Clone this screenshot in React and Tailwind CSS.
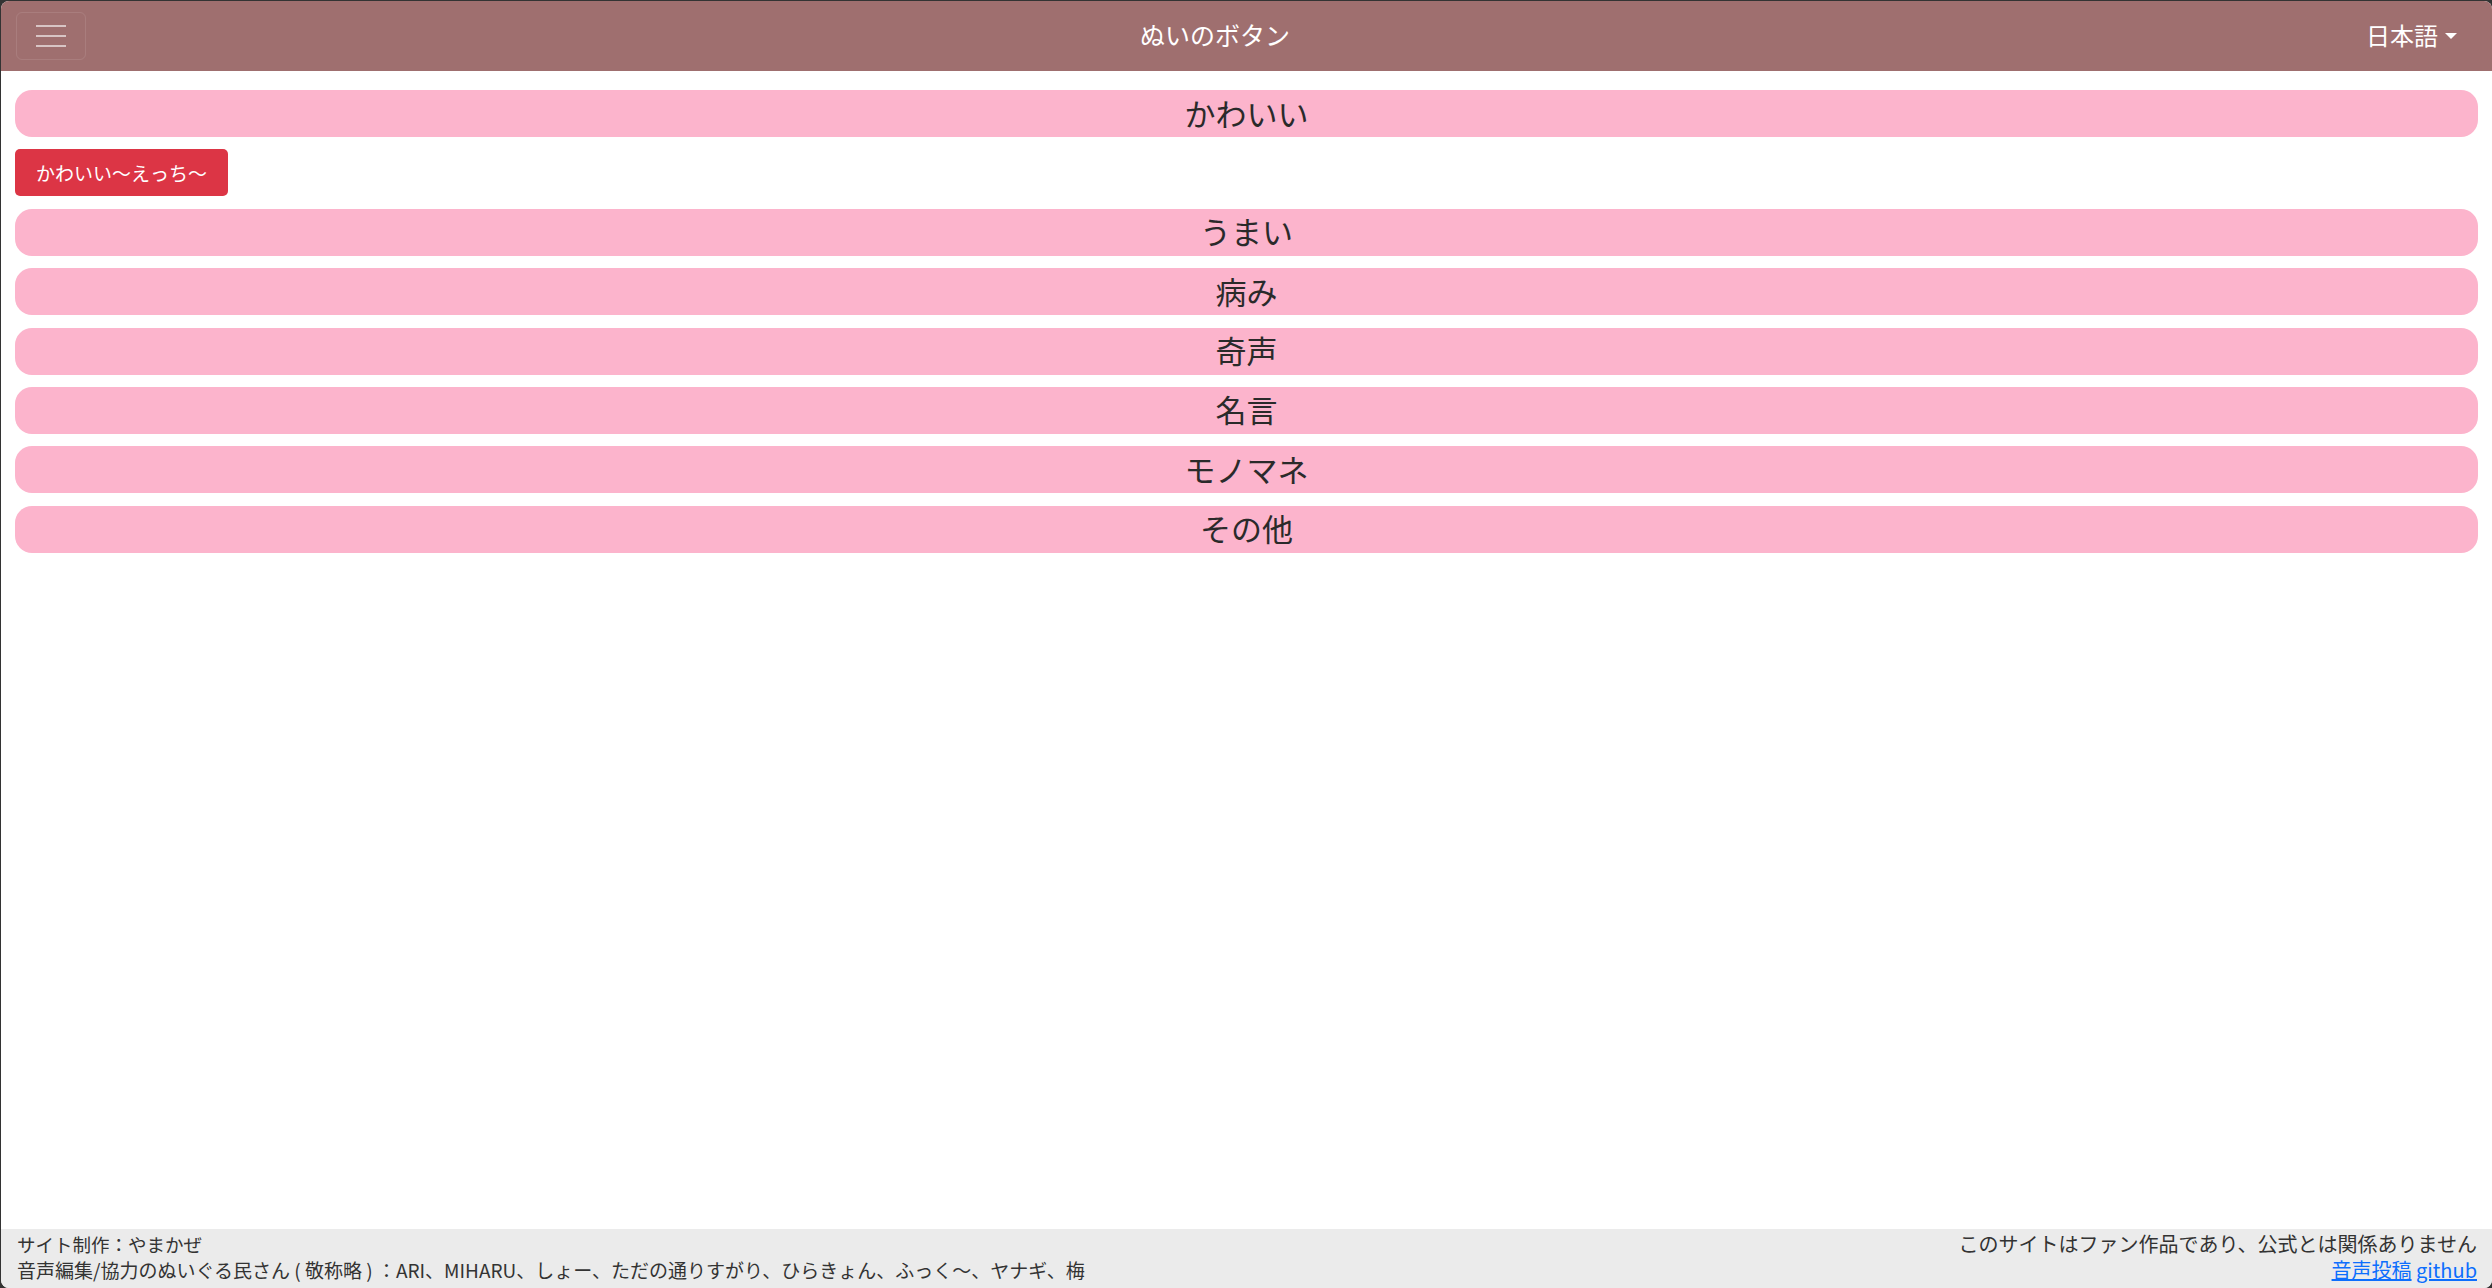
import React from 'react'

const categories = ['かわいい', 'うまい', '病み', '奇声', '名言', 'モノマネ', 'その他']

const font = { fontFamily: '"Noto Sans CJK JP", "Noto Sans", sans-serif' }

function CategoryBar({ label }) {
  return (
    <button className="w-full h-[47px] rounded-[17px] bg-[#fcb4cc] text-[#2a2a2a] text-[31px] leading-none pb-[3px] flex items-center justify-center">
      {label}
    </button>
  )
}

export default function App() {
  return (
    <div className="h-screen w-full bg-[#333] overflow-hidden" style={font}>
      <div className="ml-[1px] mt-[1px] h-[1287px] bg-white rounded-[8px] overflow-hidden flex flex-col">
        <header className="h-[70px] shrink-0 bg-[#9f6f6f] flex items-center justify-between pl-[15px] pr-[35px]">
          <button className="w-[70px] h-[48px] rounded-[6px] border border-white/10 flex flex-col items-center justify-center gap-[8px]">
            <span className="block w-[30px] h-[2px] bg-white/60" />
            <span className="block w-[30px] h-[2px] bg-white/60" />
            <span className="block w-[30px] h-[2px] bg-white/60" />
          </button>
          <div className="text-white text-[25px] mr-[22px] pb-[2px]">ぬいのボタン</div>
          <div className="flex items-center text-white text-[24px] pb-[2px]">
            日本語
            <span className="ml-[7px] mt-[2px] w-0 h-0 border-x-[6px] border-t-[6px] border-x-transparent border-t-white" />
          </div>
        </header>

        <main className="flex-1 pt-[19px] pl-[14px] pr-[14px] flex flex-col gap-[12.4px]">
          <CategoryBar label={categories[0]} />
          <div>
            <button className="h-[47px] px-[21px] rounded-[5px] bg-[#dc3545] text-white text-[19px]">
              かわいい～えっち～
            </button>
          </div>
          {categories.slice(1).map((c) => (
            <CategoryBar key={c} label={c} />
          ))}
        </main>

        <footer className="shrink-0 h-[59px] bg-[#ebebeb] text-[#333] leading-[26px] pt-[2px] pl-[16px] pr-[15px] flex justify-between">
          <div>
            <div className="text-[18.5px]">サイト制作：やまかぜ</div>
            <div className="text-[19px]">音声編集/協力のぬいぐる民さん ( 敬称略 ) ：ARI、MIHARU、しょー、ただの通りすがり、ひらきょん、ふっく～、ヤナギ、梅</div>
          </div>
          <div className="text-right text-[20px]">
            <div>このサイトはファン作品であり、公式とは関係ありません</div>
            <div>
              <a href="#" className="text-[#0d6efd] underline">音声投稿</a>{' '}
              <a href="#" className="text-[#0d6efd] underline">github</a>
            </div>
          </div>
        </footer>
      </div>
    </div>
  )
}
